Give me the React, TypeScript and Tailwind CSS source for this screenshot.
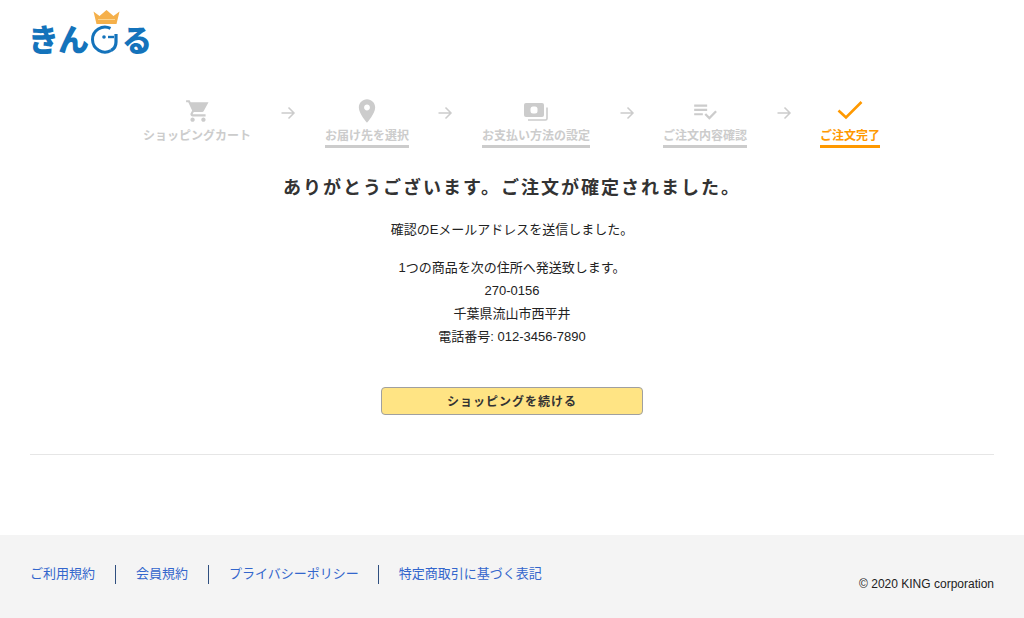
import React from "react";

const FONT = "font-['Liberation_Sans','Noto_Sans_CJK_JP',sans-serif]";

const ArrowIcon = ({ first }: { first?: boolean }) => (
  <svg width="16" height="16" viewBox="0 0 16 16" className={`mb-[20px] shrink-0 ${first ? "mx-[29px]" : "mx-[28.5px]"}`} fill="none" stroke="#cccccc" strokeWidth="1.5">
    <path d="M1.5 8H14M8.5 2.5L14 8l-5.5 5.5" />
  </svg>
);

const CartIcon = () => (
  <svg width="26" height="26" viewBox="0 0 24 24" fill="#cccccc" className="ml-[2px] -mt-[2px]">
    <path d="M7 18c-1.1 0-1.99.9-1.99 2S5.9 22 7 22s2-.9 2-2-.9-2-2-2zM1 2v2h2l3.6 7.59-1.35 2.45c-.16.28-.25.61-.25.96 0 1.1.9 2 2 2h12v-2H7.42c-.14 0-.25-.11-.25-.25l.03-.12.9-1.63h7.45c.75 0 1.41-.41 1.75-1.03L21.7 4H5.21l-.94-2H1z" />
    <path d="M17 18c-1.1 0-1.99.9-1.99 2s.89 2 1.99 2 2-.9 2-2-.9-2-2-2z" />
  </svg>
);

const PinIcon = () => (
  <svg width="28" height="28" viewBox="0 0 24 24" fill="#cccccc" className="-mt-[2px]">
    <path d="M12 2C8.13 2 5 5.13 5 9c0 5.25 7 13 7 13s7-7.75 7-13c0-3.87-3.13-7-7-7zm0 9.5c-1.38 0-2.5-1.12-2.5-2.5s1.12-2.5 2.5-2.5 2.5 1.12 2.5 2.5-1.12 2.5-2.5 2.5z" />
  </svg>
);

const MoneyIcon = () => (
  <svg width="26" height="22" viewBox="0 0 26 22" fill="none">
    <rect x="1" y="2" width="20" height="14" rx="2" fill="#cccccc" />
    <rect x="7.5" y="5.5" width="7" height="7" rx="2.5" fill="#ffffff" />
    <path d="M24 6.5V17.5a1.5 1.5 0 0 1-1.5 1.5H5" stroke="#cccccc" strokeWidth="1.6" />
  </svg>
);

const ListCheckIcon = () => (
  <svg width="28" height="26" viewBox="0 0 24 24" fill="#cccccc" className="-mt-[1px]">
    <path d="M14 10H2v2h12v-2zm0-4H2v2h12V6zM2 16h8v-2H2v2zm19.5-4.5L23 13l-6.99 7-4.51-4.5L13 14l3.01 3 5.49-5.5z" />
  </svg>
);

const CheckIcon = () => (
  <svg width="26" height="22" viewBox="0 0 26 22" fill="none" stroke="#ff9900" strokeWidth="2.6" className="-mt-[3px] -ml-[1px]">
    <path d="M1.5 11.5L9 18.5 24.5 3" />
  </svg>
);

const Logo = () => (
  <div className="relative flex h-[44px] w-[122px] items-end whitespace-nowrap">
    <svg width="27" height="14" viewBox="0 0 27 14" className="absolute left-[63px] top-0">
      <path d="M0.5 1.5l6 4.5 7-6 7 6 6-4.5-3 12.5H3.5z" fill="#f5b04a" />
      <path d="M5 9.5h17" stroke="#fbd48e" strokeWidth="1" />
    </svg>
    <span className="-ml-[2px] block h-[30px] w-[62px] font-['Noto_Sans_CJK_JP',sans-serif] text-[31px] leading-[28px] font-black tracking-[-1px] text-[#1473bb]">きん</span>
    <svg width="32" height="30" viewBox="0 0 32 30" className="ml-[2px] shrink-0" fill="none" stroke="#1473bb" strokeWidth="3">
      <path d="M20.5 4.3A12.5 12.5 0 1 0 21 26.5" />
      <path d="M26 10v8c0 4-2 7-5 8.5" strokeWidth="3.2" />
      <circle cx="14" cy="13" r="1.8" fill="#1473bb" stroke="none" />
      <path d="M18 13h6" strokeWidth="2.4" />
    </svg>
    <span className="block h-[30px] font-['Noto_Sans_CJK_JP',sans-serif] text-[30px] leading-[28px] font-black text-[#1473bb]">る</span>
  </div>
);

const Step = ({ icon, label, underline, active }: { icon: React.ReactNode; label: string; underline?: boolean; active?: boolean }) => (
  <div className="flex flex-col items-center">
    <div className="flex h-[29px] items-center justify-center">{icon}</div>
    <div className={`h-[19px] pt-[2px] text-[12px] leading-[16px] font-bold whitespace-nowrap ${active ? "text-[#ff9900]" : "text-[#cccccc]"}`}>{label}</div>
    <div className={`h-[3px] w-full ${underline ? (active ? "bg-[#ff9900]" : "bg-[#cccccc]") : ""}`} />
  </div>
);

export default function App() {
  return (
    <div className={`${FONT} flex h-[618px] flex-col bg-white text-[#333333]`}>
      <header className="h-[97px] px-[30px] pt-[10px]">
        <Logo />
      </header>

      <div className="flex items-center justify-center pr-[1px]">
        <Step icon={<CartIcon />} label="ショッピングカート" />
        <ArrowIcon first />
        <Step icon={<PinIcon />} label="お届け先を選択" underline />
        <ArrowIcon />
        <Step icon={<MoneyIcon />} label="お支払い方法の設定" underline />
        <ArrowIcon />
        <Step icon={<ListCheckIcon />} label="ご注文内容確認" underline />
        <ArrowIcon />
        <Step icon={<CheckIcon />} label="ご注文完了" underline active />
      </div>

      <main className="flex flex-col items-center">
        <h1 className="mt-[26px] text-[18px] leading-[28px] font-bold tracking-[2px]">ありがとうございます。ご注文が確定されました。</h1>
        <p className="mt-[16px] text-[13px] leading-[23px] text-[#222222]">確認のEメールアドレスを送信しました。</p>
        <div className="mt-[15px] text-center text-[13px] leading-[23px] text-[#222222]">
          <p>1つの商品を次の住所へ発送致します。</p>
          <p>270-0156</p>
          <p>千葉県流山市西平井</p>
          <p>電話番号: 012-3456-7890</p>
        </div>
        <button className="mt-[39px] h-[28px] w-[262px] rounded-[4px] border border-[#a0a0a0] bg-[#ffe484] pt-[2px] text-[12px] font-bold tracking-[1px] text-[#333333]">
          ショッピングを続ける
        </button>
      </main>

      <hr className="mx-[30px] mt-[39px] border-[#e6e6e6]" />

      <footer className="mt-auto flex h-[83px] items-start justify-between bg-[#f4f4f4] px-[30px]">
        <nav className="mt-[30px] flex text-[13px] leading-[17px] text-[#3366cc]">
          <a className="h-[19px] border-r border-[#2f4f7f] pr-[20px]">ご利用規約</a>
          <a className="h-[19px] border-r border-[#2f4f7f] px-[20px]">会員規約</a>
          <a className="h-[19px] border-r border-[#2f4f7f] pr-[19px] pl-[20px]">プライバシーポリシー</a>
          <a className="h-[19px] pl-[20px]">特定商取引に基づく表記</a>
        </nav>
        <p className="mt-[41px] text-[12px] leading-[16px] text-[#222222]">© 2020 KING corporation</p>
      </footer>
    </div>
  );
}
